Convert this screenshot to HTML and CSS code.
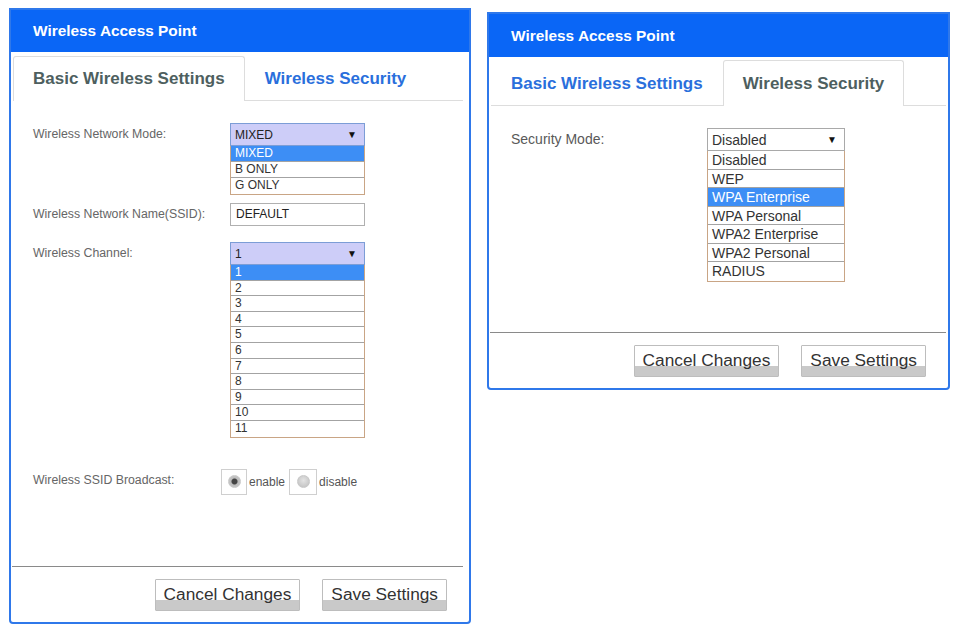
FILE: index.html
```html
<!DOCTYPE html>
<html lang="en">
<head>
    <meta charset="UTF-8">
    <meta name="viewport" content="width=device-width, initial-scale=1.0">
    <title>Wireless Access Point</title>
    <link rel="stylesheet" href="styles.css">
</head>
<body>
    <div class="page">
        <div class="panel panel-basic">
            <div class="panel-head">Wireless Access Point</div>
            <div class="tabs">
                <div class="tab active">Basic Wireless Settings</div>
                <div class="tab">Wireless Security</div>
            </div>

            <div class="panel-body">
                <div class="row">
                    <div class="label">Wireless Network Mode:</div>
                    <div class="field">
                        <div class="select lavender"><span>MIXED</span><span class="arrow">&#9660;</span></div>
                        <ul class="options">
                            <li class="sel">MIXED</li>
                            <li>B ONLY</li>
                            <li>G ONLY</li>
                        </ul>
                    </div>
                </div>

                <div class="row row-text">
                    <div class="label">Wireless Network Name(SSID):</div>
                    <div class="field">
                        <div class="text-input">DEFAULT</div>
                    </div>
                </div>

                <div class="row row-channel">
                    <div class="label">Wireless Channel:</div>
                    <div class="field">
                        <div class="select lavender"><span>1</span><span class="arrow">&#9660;</span></div>
                        <ul class="options channels">
                            <li class="sel">1</li>
                            <li>2</li>
                            <li>3</li>
                            <li>4</li>
                            <li>5</li>
                            <li>6</li>
                            <li>7</li>
                            <li>8</li>
                            <li>9</li>
                            <li>10</li>
                            <li>11</li>
                        </ul>
                    </div>
                </div>

                <div class="row">
                    <div class="label">Wireless SSID Broadcast:</div>
                    <div class="field radios">
                        <span class="radio-box"><span class="radio checked"></span></span>
                        <span class="radio-text">enable</span>
                        <span class="radio-box"><span class="radio"></span></span>
                        <span class="radio-text">disable</span>
                    </div>
                </div>
            </div>

            <div class="panel-foot">
                <button class="btn">Cancel Changes</button>
                <button class="btn">Save Settings</button>
            </div>
        </div>

        <div class="panel panel-security">
            <div class="panel-head">Wireless Access Point</div>
            <div class="tabs">
                <div class="tab">Basic Wireless Settings</div>
                <div class="tab active">Wireless Security</div>
            </div>

            <div class="panel-body">
                <div class="row">
                    <div class="label">Security Mode:</div>
                    <div class="field">
                        <div class="select"><span>Disabled</span><span class="arrow">&#9660;</span></div>
                        <ul class="options">
                            <li>Disabled</li>
                            <li>WEP</li>
                            <li class="sel">WPA Enterprise</li>
                            <li>WPA Personal</li>
                            <li>WPA2 Enterprise</li>
                            <li>WPA2 Personal</li>
                            <li>RADIUS</li>
                        </ul>
                    </div>
                </div>
            </div>

            <div class="panel-foot">
                <button class="btn">Cancel Changes</button>
                <button class="btn">Save Settings</button>
            </div>
        </div>
    </div>
</body>
</html>
```

FILE: styles.css
```css
* {
    box-sizing: border-box;
}

body {
    font-family: "Liberation Sans", Arial, sans-serif;
    background-color: #fff;
    margin: 0;
}

.page {
    display: flex;
    align-items: flex-start;
    gap: 16px;
    padding: 8px 0 0 9px;
}

.panel {
    display: flex;
    flex-direction: column;
    width: 462px;
    border: 2px solid #2f78ea;
    border-radius: 0 0 4px 4px;
    background: #fff;
}

.panel-basic {
    height: 616px;
}

.panel-security {
    width: 463px;
    height: 378px;
    margin-top: 4px;
}

.panel-head {
    height: 42px;
    line-height: 42px;
    padding-left: 22px;
    background: #0a66f6;
    color: #fff;
    font-size: 15.4px;
    font-weight: bold;
}

.panel-security .panel-head {
    height: 43px;
    line-height: 43px;
}

/* tabs */
.tabs {
    display: flex;
    margin: 0 6px 0 2px;
    padding-top: 4px;
    border-bottom: 1px solid #ddd;
}

.panel-security .tabs {
    margin-right: 2px;
    padding-top: 3px;
}

.tab {
    height: 44px;
    line-height: 44px;
    padding: 0 19px;
    border: 1px solid transparent;
    border-bottom: none;
    color: #2a6fdc;
    font-size: 17px;
    font-weight: bold;
}

.panel-security .tab {
    height: 45px;
    line-height: 45px;
}

.tab.active {
    color: #4e5f5f;
    border-color: #ddd;
    border-radius: 3px 3px 0 0;
    background: #fff;
    margin-bottom: -1px;
}

.panel-basic .tab.active {
    height: 45px;
}

.panel-security .tab.active {
    height: 46px;
}

/* form */
.panel-body {
    flex: 1;
    padding: 22px 22px 0 22px;
}

.row {
    display: flex;
    margin-bottom: 8px;
}

.row-text {
    margin-bottom: 16px;
}

.row-channel {
    margin-bottom: 31px;
}

.label {
    width: 197px;
    padding-top: 4px;
    color: #666;
    font-size: 12.3px;
    line-height: 14px;
}

.panel-security .label {
    width: 196px;
    padding-top: 3px;
    color: #595959;
    font-size: 14px;
    line-height: 16px;
}

.field {
    width: 135px;
}

.panel-security .field {
    width: 138px;
}

.select {
    display: flex;
    justify-content: space-between;
    align-items: center;
    height: 23px;
    padding: 0 7px 0 4px;
    border: 1px solid #a9a9a9;
    background: #fff;
    color: #333;
    font-size: 14px;
}

.select.lavender {
    border-color: #7c9dd6;
    background: #cdcdf8;
    color: #222;
    font-size: 12px;
}

.arrow {
    font-size: 10px;
    color: #111;
}

.options {
    list-style: none;
    margin: 0;
    padding: 0;
    border: 1px solid #c9a585;
    border-top: none;
}

.options li {
    height: 16px;
    line-height: 15px;
    padding-left: 4px;
    border-bottom: 1px solid #a3a3a3;
    color: #333;
    font-size: 12px;
}

.options.channels li {
    height: 15.6px;
    line-height: 15px;
}

.panel-security .options li {
    height: 18.5px;
    line-height: 18px;
    font-size: 14px;
}

.options li:last-child {
    border-bottom: none;
}

.options li.sel {
    background: #3d8ef5;
    color: #fff;
}

.text-input {
    height: 23px;
    line-height: 21px;
    padding: 0 5px;
    border: 1px solid #b0b0b0;
    color: #222;
    font-size: 12px;
}

/* radios */
.radios {
    display: flex;
    align-items: center;
    width: auto;
    margin-left: -9px;
}

.radio-box {
    display: flex;
    align-items: center;
    justify-content: center;
    width: 26px;
    height: 26px;
    border: 1px solid #cfcfcf;
}

.radio-box + .radio-text + .radio-box {
    width: 28px;
    margin-left: 4px;
}

.radio {
    width: 13px;
    height: 13px;
    border-radius: 50%;
    background: radial-gradient(circle at 50% 40%, #e4e4e4, #bdbdbd);
    border: 1px solid #c8c8c8;
}

.radio.checked {
    background: radial-gradient(circle, #444 0, #444 2.5px, #bbb 3.5px, #d0d0d0);
}

.radio-text {
    margin-left: 2px;
    color: #555;
    font-size: 12px;
}

/* footer */
.panel-foot {
    display: flex;
    justify-content: flex-end;
    gap: 22px;
    margin: 0 6px 0 1px;
    padding: 12px 16px 11px 0;
    border-top: 1px solid #8a8a8a;
}

.panel-security .panel-foot {
    margin-right: 2px;
    padding-right: 20px;
}

.btn {
    height: 32px;
    padding: 0 8px 2px;
    border: 1px solid #bdbdbd;
    border-radius: 1px;
    background: linear-gradient(#fff 0, #fff 68%, #c9c9c9 68%);
    color: #333;
    font-family: "Liberation Sans", Arial, sans-serif;
    font-size: 17.3px;
    cursor: pointer;
}
```
